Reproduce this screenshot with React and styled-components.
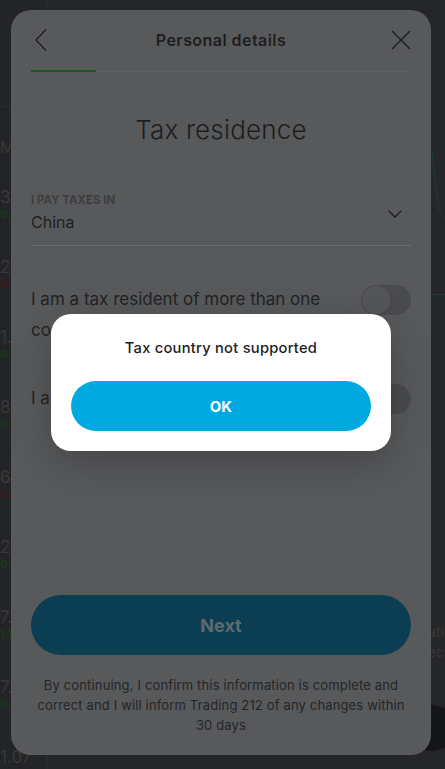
import React from "react";
import styled, { createGlobalStyle } from "styled-components";

const Global = createGlobalStyle`
  html, body { margin: 0; padding: 0; background: #252628; }
  body { font-family: Inter, "Noto Sans", sans-serif; -webkit-font-smoothing: antialiased; }
  * { box-sizing: border-box; }
`;

const Page = styled.div`
  position: relative;
  width: 445px;
  height: 769px;
  overflow: hidden;
  background: #252628;
`;

/* ---------- dimmed app behind the modal ---------- */
const AppLayout = styled.div`
  display: grid;
  grid-template-columns: 47px 1fr;
  height: 100%;
`;

const Sidebar = styled.div`
  display: flex;
  flex-direction: column;
  border-right: 1px solid #2c2d30;
  background: #232426;
`;

const SideTop = styled.div`
  height: 107px;
  border-bottom: 1px solid #2a2b2e;
`;

const SideHeading = styled.div`
  font-size: 16px;
  line-height: 20px;
  color: #353639;
  margin: 30px 0 30px;
`;

const Quote = styled.div`
  display: flex;
  flex-direction: column;
  height: 70px;
`;

const QuoteValue = styled.span`
  font-size: 17px;
  line-height: 20px;
  color: #37383b;
  white-space: nowrap;
`;

const QuoteChange = styled.span`
  font-size: 11px;
  line-height: 14px;
  font-weight: 700;
  color: ${(p) => (p.$up ? "#173a1b" : "#3e1a1c")};
  white-space: nowrap;
`;

const Main = styled.div`
  display: flex;
  flex-direction: column;
  align-items: flex-end;
`;

const ChartArea = styled.div`
  margin-top: 140px;
  width: 100%;
  height: 155px;
  border-bottom: 1px solid #1d3a40;
  display: flex;
  justify-content: flex-end;
`;

const SideNote = styled.div`
  margin-top: 327px;
  margin-right: 1px;
  font-size: 14px;
  line-height: 20px;
  color: #37383b;
  white-space: nowrap;
  text-align: right;
`;

const Fab = styled.div`
  position: absolute;
  right: -10px;
  top: 705px;
  width: 46px;
  height: 46px;
  border-radius: 50%;
  background: #141517;
`;

/* ---------- modal card ---------- */
const Card = styled.div`
  position: absolute;
  left: 11px;
  top: 10px;
  width: 420px;
  height: 745px;
  border-radius: 20px;
  background: #58595b;
  display: flex;
  flex-direction: column;
  padding: 0 20px 20px;
  overflow: hidden;
`;

const Header = styled.div`
  height: 60px;
  display: flex;
  align-items: center;
  justify-content: space-between;
`;

const HeaderTitle = styled.div`
  font-size: 16px;
  font-weight: 600;
  color: #1d1e20;
  letter-spacing: 0.45px;
`;

const IconButton = styled.div`
  width: 20px;
  height: 22px;
  display: flex;
  align-items: center;
  justify-content: center;
  color: #1d1e20;
`;

const Progress = styled.div`
  position: relative;
  height: 2px;
  display: flex;
  align-items: flex-start;
`;

const ProgressTrack = styled.div`
  flex: 1;
  height: 1px;
  background: #606163;
  margin-top: 0.5px;
`;

const ProgressFill = styled.div`
  position: absolute;
  left: 0;
  top: 0;
  height: 2px;
  background: #1a5a22;
`;

const PageTitle = styled.h1`
  margin: 42px 0 0;
  text-align: center;
  font-size: 26px;
  line-height: 32px;
  font-weight: 300;
  color: #1d1e20;
  letter-spacing: 0.2px;
`;

const Field = styled.div`
  margin-top: 47px;
  display: flex;
  align-items: center;
  justify-content: space-between;
  padding-bottom: 12px;
  border-bottom: 1px solid #6a6b6d;
`;

const FieldText = styled.div`
  display: flex;
  flex-direction: column;
  gap: 4px;
`;

const FieldLabel = styled.div`
  font-size: 11.3px;
  line-height: 14px;
  font-weight: 700;
  color: #3d3e40;
  letter-spacing: 0.1px;
`;

const FieldValue = styled.div`
  font-size: 16px;
  line-height: 22px;
  color: #1f2022;
`;

const ToggleRow = styled.div`
  margin-top: ${(p) => p.$gap}px;
  display: flex;
  align-items: flex-start;
  justify-content: space-between;
  gap: 24px;
`;

const ToggleText = styled.div`
  flex: 1;
  max-width: 300px;
  font-size: 17px;
  line-height: 31px;
  color: #222325;
`;

const Switch = styled.div`
  flex: none;
  width: 50px;
  height: 30px;
  margin-top: 0.5px;
  border-radius: 15px;
  background: #4a4b4e;
  padding: 1px;
  display: flex;
  align-items: center;
`;

const Knob = styled.div`
  width: 28px;
  height: 28px;
  border-radius: 50%;
  background: #545558;
  box-shadow: 0 0 0 1px #4d4e51, 0 1px 2px rgba(0, 0, 0, 0.15);
`;

const Spacer = styled.div`
  flex: 1;
`;

const NextButton = styled.div`
  height: 60px;
  border-radius: 30px;
  background: #0b3e52;
  display: flex;
  align-items: center;
  justify-content: center;
  font-size: 18px;
  font-weight: 700;
  color: #5e6a6e;
`;

const Disclaimer = styled.p`
  margin: 20px 0 0;
  padding: 0 6px;
  text-align: center;
  font-size: 13px;
  line-height: 20px;
  color: #252628;
  letter-spacing: 0.15px;
`;

/* ---------- alert dialog ---------- */
const DialogLayer = styled.div`
  position: absolute;
  inset: 0;
  display: flex;
  align-items: center;
  justify-content: center;
`;

const Dialog = styled.div`
  width: 340px;
  background: #ffffff;
  border-radius: 20px;
  padding: 24px 20px 20px;
  display: flex;
  flex-direction: column;
  align-items: stretch;
  gap: 23px;
  box-shadow: 0 12px 40px rgba(0, 0, 0, 0.22);
`;

const DialogMessage = styled.div`
  text-align: center;
  font-size: 14.7px;
  line-height: 20px;
  font-weight: 500;
  color: #1c1c1e;
  letter-spacing: 0.25px;
`;

const OkButton = styled.button`
  height: 50px;
  border: none;
  border-radius: 25px;
  background: #00a9e0;
  color: #ffffff;
  font-family: inherit;
  font-size: 15px;
  font-weight: 700;
  cursor: pointer;
`;

const quotes = [
  ["3.", "0.1", true],
  ["2.", "0.0", false],
  ["1.", "0.0", true],
  ["8.", "0.0", true],
  ["6.", "0.0", false],
  ["2.", "0.1", true],
  ["7.", "1.1", true],
  ["7.", "0.3", true],
  ["1.07", "", true],
];

export default function App() {
  return (
    <Page>
      <Global />
      <AppLayout>
        <Sidebar>
          <SideTop />
          <SideHeading>Mo</SideHeading>
          {quotes.map(([v, c, up], i) => (
            <Quote key={i}>
              <QuoteValue>{v}</QuoteValue>
              <QuoteChange $up={up}>{c}</QuoteChange>
            </Quote>
          ))}
        </Sidebar>
        <Main>
          <ChartArea>
            <svg width="16" height="80" viewBox="0 0 16 80" style={{ marginTop: 8 }}>
              <polyline
                points="0,14 3,2 7,40 10,62 16,70"
                fill="none"
                stroke="#1d3a40"
                strokeWidth="1"
              />
            </svg>
          </ChartArea>
          <SideNote>
            ati
            <br />
            ec
          </SideNote>
        </Main>
      </AppLayout>
      <Fab />

      <Card>
        <Header>
          <IconButton>
            <svg width="12" height="22" viewBox="0 0 12 22">
              <polyline points="11,0.5 0.8,11 11,21.5" fill="none" stroke="currentColor" strokeWidth="1.3" />
            </svg>
          </IconButton>
          <HeaderTitle>Personal details</HeaderTitle>
          <IconButton>
            <svg width="20" height="20" viewBox="0 0 20 20">
              <path d="M1 1 L19 19 M19 1 L1 19" fill="none" stroke="currentColor" strokeWidth="1.3" />
            </svg>
          </IconButton>
        </Header>
        <Progress>
          <ProgressTrack />
          <ProgressFill style={{ width: "17%" }} />
        </Progress>

        <PageTitle>Tax residence</PageTitle>

        <Field>
          <FieldText>
            <FieldLabel>I PAY TAXES IN</FieldLabel>
            <FieldValue>China</FieldValue>
          </FieldText>
          <svg width="14" height="8" viewBox="0 0 14 8" style={{ marginRight: 9, marginTop: 2 }}>
            <polyline points="0.7,0.8 7,7 13.3,0.8" fill="none" stroke="#1d1e20" strokeWidth="1.3" />
          </svg>
        </Field>

        <ToggleRow $gap={38}>
          <ToggleText>I am a tax resident of more than one country</ToggleText>
          <Switch>
            <Knob />
          </Switch>
        </ToggleRow>

        <ToggleRow $gap={37}>
          <ToggleText>I am a U.S. person</ToggleText>
          <Switch>
            <Knob />
          </Switch>
        </ToggleRow>

        <Spacer />

        <NextButton>Next</NextButton>
        <Disclaimer>
          By continuing, I confirm this information is complete and correct and I will inform Trading 212 of any
          changes within 30 days
        </Disclaimer>

        <DialogLayer>
          <Dialog role="alertdialog">
            <DialogMessage>Tax country not supported</DialogMessage>
            <OkButton>OK</OkButton>
          </Dialog>
        </DialogLayer>
      </Card>
    </Page>
  );
}
